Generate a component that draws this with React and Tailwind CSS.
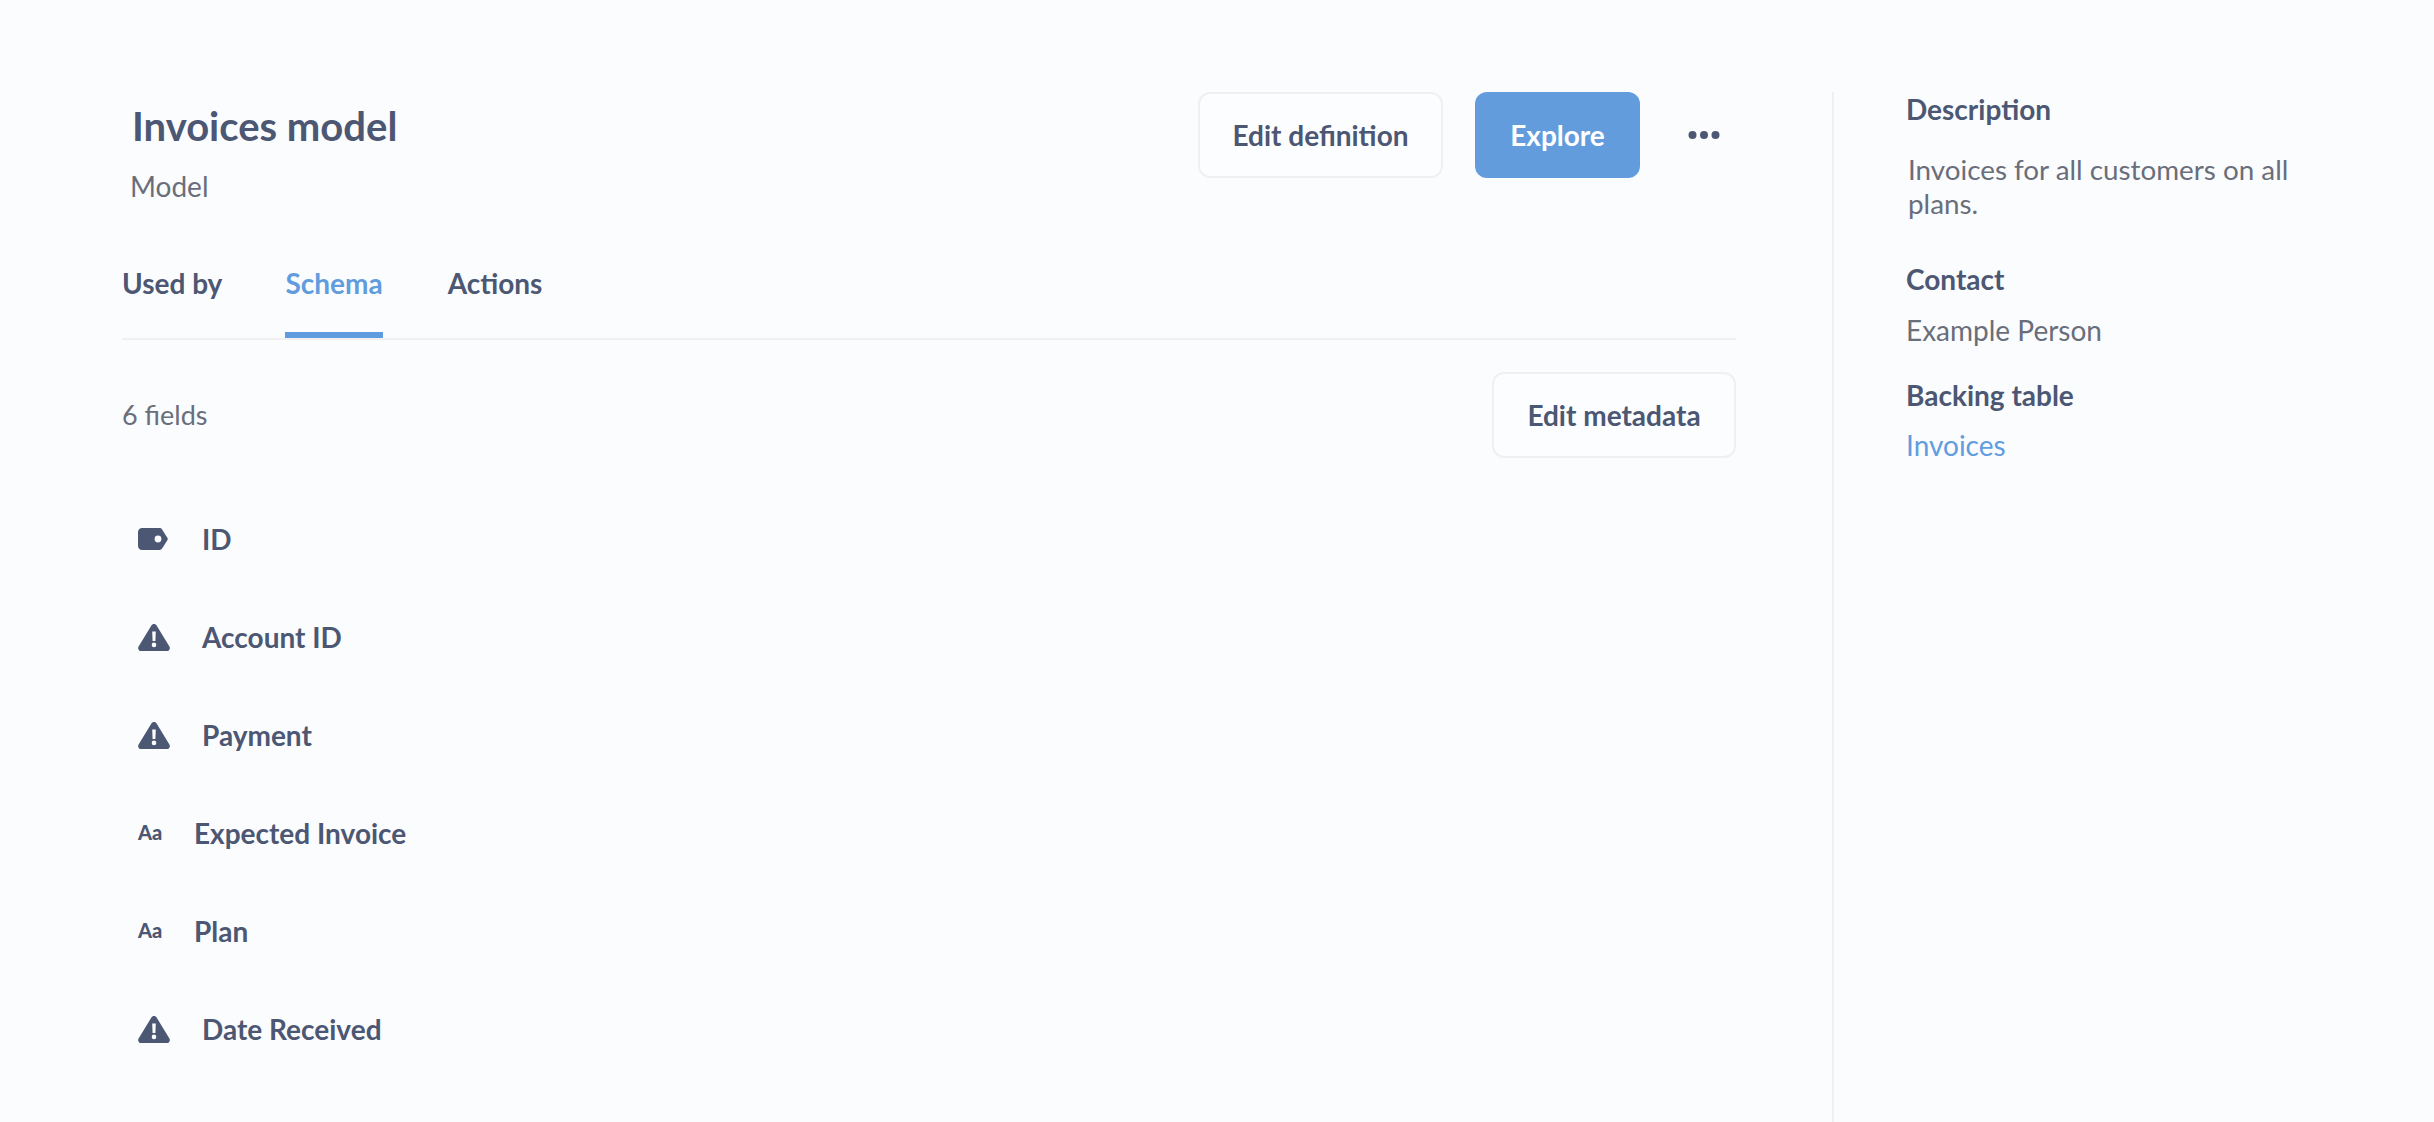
function TagIcon() {
  return (
    <svg width="30" height="22" viewBox="0 0 30 22" className="shrink-0">
      <path fillRule="evenodd" fill="#4c5773" d="M4 0H21.5C22.6 0 23.5 .5 24.1 1.4L29.5 10C29.9 10.6 29.9 11.4 29.5 12L24.1 20.6C23.5 21.5 22.6 22 21.5 22H4C1.8 22 0 20.2 0 18V4C0 1.8 1.8 0 4 0ZM20 7.6A3.4 3.4 0 1 0 20 14.4A3.4 3.4 0 1 0 20 7.6Z" />
    </svg>
  );
}

function WarnIcon() {
  return (
    <svg width="32" height="27" viewBox="0 0 32 27" className="shrink-0">
      <path fillRule="evenodd" fill="#4c5773" d="M13.4 1.5C14.6 -.5 17.4 -.5 18.6 1.5L31.4 22.6C32.6 24.6 31.2 27 28.9 27H3.1C.8 27 -.6 24.6 .6 22.6ZM14.2 7.5L14.6 17H17.4L17.8 7.5ZM16 18.6A2.3 2.3 0 1 0 16 23.2A2.3 2.3 0 1 0 16 18.6Z" />
    </svg>
  );
}

function Row({ kind, label }) {
  if (kind === "text") {
    return (
      <div className="flex items-center h-[98px] pl-4">
        <span className="w-[56px] shrink-0 pb-[2px] text-[20px] font-black text-[#4c5773] leading-none">Aa</span>
        <span className="text-[28px] font-bold text-[#4c5773] leading-none">{label}</span>
      </div>
    );
  }
  return (
    <div className="flex items-center h-[98px] pl-4">
      <span className="w-[64px] shrink-0 flex items-center">
        {kind === "tag" ? <TagIcon /> : <WarnIcon />}
      </span>
      <span className="text-[28px] font-bold text-[#4c5773] leading-none">{label}</span>
    </div>
  );
}

function OutlineButton({ children, className }) {
  return (
    <button className={"h-[86px] rounded-[12px] border-2 border-[#f0f0f0] bg-[#fcfdfe] text-[28px] font-bold text-[#4c5773] " + className}>
      {children}
    </button>
  );
}

export default function App() {
  return (
    <div
      className="flex min-h-[1122px] h-screen overflow-hidden bg-[#fbfcfe]"
      style={{ fontFamily: '"Lato", "Liberation Sans", sans-serif' }}
    >
      <main className="w-[1736px] shrink-0 pl-[122px] pt-[92px]">
        <header className="flex items-start justify-between">
          <div>
            <h1 className="pl-[10px] pt-[10px] text-[40px] leading-[48px] font-bold text-[#4c5773]">Invoices model</h1>
            <p className="pl-[8px] pt-[18px] text-[28px] leading-[36px] text-[#696e7b]">Model</p>
          </div>
          <div className="flex items-start">
            <OutlineButton className="w-[245px]">Edit definition</OutlineButton>
            <button className="ml-[32px] h-[86px] w-[165px] rounded-[12px] bg-[#639cdd] text-[28px] font-bold text-white">Explore</button>
            <svg width="32" height="10" viewBox="0 0 32 10" className="ml-[48px] mr-[16px] mt-[38px]" fill="#4c5773">
              <circle cx="4.5" cy="5" r="4" />
              <circle cx="16" cy="5" r="4" />
              <circle cx="27.5" cy="5" r="4" />
            </svg>
          </div>
        </header>

        <nav className="mt-[59px] flex h-[77px] items-start gap-[63px] border-b-2 border-[#f0f0f0] text-[28px] font-bold text-[#4c5773]">
          <span className="leading-[40px]">Used by</span>
          <span className="h-[75px] border-b-[6px] border-[#5f9bdf] leading-[40px] text-[#619cde]">Schema</span>
          <span className="ml-[2px] leading-[40px]">Actions</span>
        </nav>

        <div className="mt-[32px] flex items-center justify-between">
          <span className="text-[27px] text-[#696e7b]">6 fields</span>
          <OutlineButton className="w-[244px]">Edit metadata</OutlineButton>
        </div>

        <div className="mt-[32px]">
          <Row kind="tag" label="ID" />
          <Row kind="warn" label="Account ID" />
          <Row kind="warn" label="Payment" />
          <Row kind="text" label="Expected Invoice" />
          <Row kind="text" label="Plan" />
          <Row kind="warn" label="Date Received" />
        </div>
      </main>

      <aside className="ml-[96px] mt-[92px] flex-1 border-l-2 border-[#f0f0f0] pl-[72px]">
        <h2 className="-mt-px text-[28px] leading-[36px] font-bold text-[#4c5773]">Description</h2>
        <p className="mt-[26px] w-[400px] pl-[2px] text-[27.8px] leading-[34px] text-[#696e7b]">Invoices for all customers on all plans.</p>
        <h2 className="mt-[40px] text-[28px] leading-[36px] font-bold text-[#4c5773]">Contact</h2>
        <p className="mt-[16px] text-[28px] leading-[35px] text-[#696e7b]">Example Person</p>
        <h2 className="mt-[29px] text-[28px] leading-[36px] font-bold text-[#4c5773]">Backing table</h2>
        <p className="mt-[15px] text-[28px] leading-[35px] text-[#619cde]">Invoices</p>
      </aside>
    </div>
  );
}
